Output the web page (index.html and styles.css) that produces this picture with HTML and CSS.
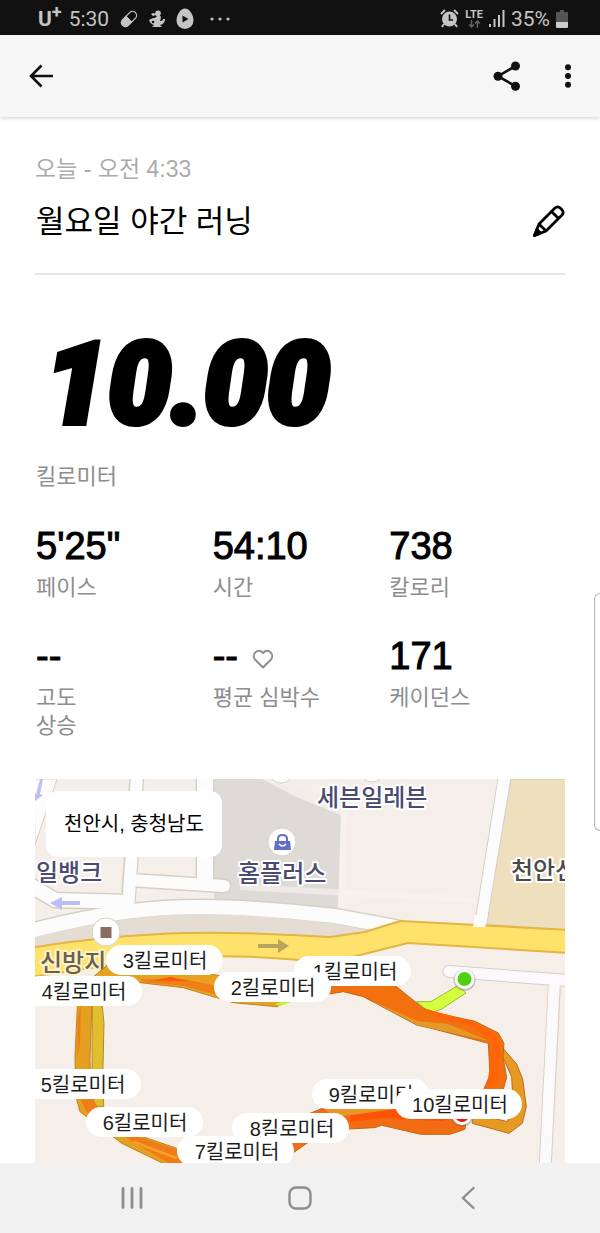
FILE: index.html
```html
<!DOCTYPE html>
<html lang="ko">
<head>
<meta charset="utf-8">
<meta name="viewport" content="width=device-width, initial-scale=1">
<title>월요일 야간 러닝</title>
<link rel="stylesheet" href="styles.css">
</head>
<body>
<div class="status">
  <div class="status-group">
    <span class="carrier">U<sup>+</sup></span>
    <span>5:30</span>
    <svg class="icon-pill" width="18" height="18" viewBox="0 0 20 20"><g transform="rotate(-45 10 10)"><rect x="0" y="5.500" width="20" height="9" rx="4.500" fill="none" stroke="#c4c4c4" stroke-width="1.400"/><path d="M10 5.500H4.500a4.500 4.500 0 0 0 0 9H10z" fill="#c4c4c4" stroke="#c4c4c4"/></g></svg>
    <svg class="icon-genie" width="16" height="18" viewBox="0 0 16 18"><g fill="#c4c4c4"><circle cx="9" cy="3.200" r="2.800"/><path d="M2 4l2-1 3 1 3 1q2 1 2 3l-1 3q3 0 3-2h2q0 5-5 6l2 2H3l2-2q-4-1-5-5l4-2h2l2-2-1-1-3 1z"/></g><circle cx="4" cy="12" r="1.300" fill="#111"/></svg>
    <svg class="icon-egg" width="18" height="22" viewBox="0 0 18 22"><path d="M9 .5C13.500.5 17.500 7 17.500 12.500a8.500 8.500 0 0 1-17 0C.5 7 4.500.5 9 .5z" fill="#c4c4c4"/><path d="M6.500 7.500v7l6-3.500z" fill="#111"/></svg>
    <svg class="icon-dots" width="20" height="4" viewBox="0 0 20 4" fill="#c4c4c4"><circle cx="2" cy="2" r="1.600"/><circle cx="10" cy="2" r="1.600"/><circle cx="18" cy="2" r="1.600"/></svg>
  </div>
  <div class="status-group status-right">
    <svg width="19" height="19" viewBox="0 0 19 19"><circle cx="9.500" cy="10" r="7.500" fill="#c4c4c4"/><path d="M1 5l4-4M18 5l-4-4M4 15l-2 3M15 15l2 3" stroke="#c4c4c4" stroke-width="2" fill="none"/><path d="M9.500 5.500V11H13" stroke="#111" stroke-width="1.600" fill="none"/></svg>
    <span class="lte">LTE<svg width="13" height="8" viewBox="0 0 13 8"><path d="M3.500 0v7M1 4.500L3.500 7 6 4.500M9.500 8V1M7 3.500L9.500 1 12 3.500" fill="none" stroke="#666" stroke-width="1.400"/></svg></span>
    <svg width="16" height="17" viewBox="0 0 16 17" fill="#c4c4c4"><path d="M0 14h2v3H0zM4.500 9h2v8h-2zM9 5h2v12H9zM13.500 0h2v17h-2z"/></svg>
    <span>35%</span>
    <svg width="12" height="18" viewBox="0 0 12 18"><path d="M4 0h4v2h3q1 0 1 1v9H0V3q0-1 1-1h3z" fill="#555"/><path d="M0 12h12v5q0 1-1 1H1q-1 0-1-1z" fill="#ccc"/></svg>
  </div>
</div>

<header class="bar">
  <button class="icon-button" aria-label="뒤로"><svg width="24" height="24" viewBox="0 0 24 24" fill="none" stroke="#111" stroke-width="2.600"><path d="M12.500 1.500L2 12l10.500 10.500M2 12h22"/></svg></button>
  <div class="bar-actions">
    <button class="icon-button" aria-label="공유"><svg width="28" height="30" viewBox="0 0 28 30"><path d="M22.500 5L5 15.200l17.500 10" fill="none" stroke="#111" stroke-width="2.600"/><g fill="#111"><circle cx="22.500" cy="5" r="4.500"/><circle cx="5" cy="15.200" r="4.500"/><circle cx="22.500" cy="25.200" r="4.500"/></g></svg></button>
    <button class="icon-button" aria-label="더보기"><svg width="6" height="24" viewBox="0 0 6 24" fill="#111"><circle cx="3" cy="3.200" r="3"/><circle cx="3" cy="12" r="3"/><circle cx="3" cy="20.800" r="3"/></svg></button>
  </div>
</header>

<main class="run">
  <section class="heading">
    <p class="date">오늘 - 오전 4:33</p>
    <div class="title-row">
      <h1 class="title">월요일 야간 러닝</h1>
      <button class="icon-button" aria-label="이름 편집"><svg width="32" height="32" viewBox="0 0 32 32" fill="none" stroke="#000" stroke-width="2.800" stroke-linejoin="round"><path d="M1.500 30.500L6 19 22 3q2.500-2.200 5-.2l2.200 2.200q2 2.500-.2 5L13 26zM18.500 6.500l7 7M6 19l7 7"/><path d="M1.500 30.500l2.500-6 3.500 3.500z" fill="#000"/></svg></button>
    </div>
  </section>

  <p class="distance">10.00</p>
  <p class="label">킬로미터</p>

  <section class="stats">
    <div><p class="value">5'25"</p><p class="label">페이스</p></div>
    <div><p class="value">54:10</p><p class="label">시간</p></div>
    <div><p class="value">738</p><p class="label">칼로리</p></div>
    <div><p class="value">--</p><p class="label">고도<br>상승</p></div>
    <div><p class="value">-- <svg class="heart" width="22" height="20" viewBox="0 0 22 20"><path d="M11 18.500L3 10.500C-1 5.500 6-2 11 4c5-6 12 1.500 8 6.500z" fill="none" stroke="#8d8d8d" stroke-width="2" stroke-linejoin="round"/></svg></p><p class="label">평균 심박수</p></div>
    <div><p class="value">171</p><p class="label">케이던스</p></div>
  </section>

  <section class="map">
    <svg class="map-art" viewBox="35 779 530 384" preserveAspectRatio="xMinYMin slice">
      <!-- ground -->
      <path fill="#f6eee8" d="M35 779h530v384H35z"/>
      <path fill="#dedad5" d="M212 779h52l28 12 45 20q4 3 4 8l-3 92-124-12z"/>
      <path fill="#f2ede8" d="M262 779h22l57 28v8l-45-18z"/>
      <path fill="none" stroke="#faf5f1" stroke-opacity=".6" stroke-width="6" d="M344 812l-3 98M240 887l235 13"/>
      <path fill="#eedfbd" stroke="#d6cdb5" d="M511 779h55v151l-80-6z"/>
      <!-- side streets -->
      <g fill="none" stroke="#d6d0c4">
        <path stroke-width="15" d="M137 775l-9 130"/>
        <path stroke-width="19" d="M205 775v110"/>
        <path stroke-width="15" stroke-linecap="round" d="M130 880l94 6"/>
        <path stroke-width="17" d="M30 885l25 15 75 2"/>
        <path stroke-width="17" d="M30 931C100 913 150 907 200 907c60 0 100 6 135 9l65 12"/>
        <path fill="#fdfcfd" d="M34 779h23l-22 66z"/>
        <path fill="#fdfcfd" d="M498 778h13l-25 150h-12z"/>
      </g>
      <path fill="#e5dcd3" d="M35 937c65-15 115-23 165-23 60 0 100 6 130 9l45 9-45 7-150-5-145 14z"/>
      <g fill="none" stroke="#fdfcfd">
        <path stroke-width="12" d="M137 775l-9 135"/>
        <path stroke-width="16" d="M205 775v110"/>
        <path stroke-width="12" stroke-linecap="round" d="M130 880l94 6"/>
        <path stroke-width="14" d="M30 885l25 15 75 2"/>
        <path stroke-width="14" d="M30 931C100 913 150 907 200 907c60 0 100 6 135 9l65 12"/>
      </g>
      <!-- main road -->
      <path fill="#ffe26c" stroke="#e3b543" stroke-width="2" d="M30 948q70-12 155-15 70-1 145 4l35-5 35-11 170 9v23l-162-10-48 12q-20 5-60 5-100-9-175 3l-95 14z"/>
      <path fill="#fdfcfd" d="M475 915h13l-3 12h-12z"/>
      <path fill="#b9a45e" d="M258 944h20v-5l11 7-11 7v-5h-20z"/>
      <path fill="#bfbdf6" d="M50 903l12-6v4h18v4H62v5zM36 795l4-16h3l-3 15 3 1-8 6v-8z"/>
      <!-- lower right streets -->
      <g fill="none" stroke-linecap="round">
        <path stroke="#d6d0c4" stroke-width="13" d="M449 971.500l120 9M554.500 984L545 1170"/>
        <path stroke="#fcf9fc" stroke-width="11" d="M449 971.500l120 9M554.500 980L545 1170"/>
      </g>
      <!-- places -->
      <g fill="#fff" stroke="#d6d0c8"><circle cx="372" cy="770" r="12"/><circle cx="281" cy="771" r="12"/><circle cx="282" cy="842" r="14"/><circle cx="106" cy="932" r="14"/></g>
      <path fill="#8b6b60" d="M100.500 927h11v11h-11z"/>
      <path fill="#626fc4" d="M275 841h15l1 9h-17z"/>
      <path fill="none" stroke="#626fc4" stroke-width="2" d="M278 842v-3q0-4 4.500-4t4.500 4v3"/>
      <path fill="none" stroke="#fff" stroke-width="1.500" d="M279 844q3.500 4 7 0"/>
      <g class="place">
        <text x="317" y="806">세븐일레븐</text>
        <text x="238" y="882">홈플러스</text>
        <text x="36" y="881">일뱅크</text>
        <text class="place-dark" x="511" y="879">천안산</text>
        <text class="place-brown" x="40" y="971">신방지</text>
      </g>
      <!-- route, western half -->
      <g transform="translate(30 960) scale(.3333)" stroke="#bb8420" stroke-width="3" stroke-linejoin="round">
        <path fill="#dfbf2e" d="M187 120h28l7 70-3 130 2 120h-28l-7-60z"/>
        <path fill="#e6a021" d="M143 120h43l-6 180 4 110 16 30 80 70 160 55 60 60h-70l-155-75-125-95-12-45-3-120z"/>
        <path fill="#ee7d17" stroke="none" d="M143 175l10-45-3 120-8 45zM150 418h38l30 45 85 60 150 50 20 50h-35L290 535l-120-80z"/>
        <path fill="none" stroke="#f7a024" stroke-width="8" d="M310 545l130 50"/>
        <path fill="#e8a222" d="M185 55l50-42 325 32 240 70-60 25-130-12-50-15-100-30-130-15z"/>
        <path fill="#f17f17" stroke="none" d="M330 57l130 0 100 20v28l-100-28-120-10z"/>
        <path fill="#ff5a0a" stroke="none" d="M370 62l50-12 60 14z"/>
        <path fill="#c7f22e" stroke="none" d="M735 132l70-22 10 5-65 23z"/>
      </g>
      <!-- route, eastern half -->
      <g transform="translate(300 960) scale(.3333)" stroke="#bb6a1c" stroke-width="3" stroke-linejoin="round">
        <path fill="#d4ff3e" stroke="#9dba34" d="M350 125h43l80-48 25 22-73 48-35 12z"/>
        <path fill="#e69a22" d="M605 260l45 52 18 45 11 83-12 50-40 30-110-30 0-30 105 25 18-45-5-90-27-60z"/>
        <path fill="#f36b12" d="M-35 575l65-115 50-20 70-15h180l170 40-5 43-45 15h-88l-117-27-20 7-100 5-80 25-65 45z"/>
        <path fill="#e8952a" stroke="none" d="M75 448l180-8 30 8-90 14-95 8z"/>
        <path fill="#ff5408" stroke="none" d="M150 466l130-18 170 28-25 8-175-10-100 12z"/>
        <path fill="#f3700f" d="M-10 60h275l105 85 40 14 115 25 70 35 17 31-3 40 11 63-13 45h-60l23-53-5-95-160-42-55-13-160-85-60-15-60 10-50 0z"/>
        <path fill="#e59a27" stroke="none" d="M215 122l140 62 90 8 120 50-160-34-53-13z"/>
        <path fill="#ff6408" stroke="none" d="M370 145l150 40 65 35 18 35-8 110-35 20 20-140-60-45-110-28z"/>
      </g>
      <circle cx="464.500" cy="980" r="11" fill="#7776"/><circle cx="464.500" cy="979" r="10" fill="#fff"/><circle cx="464.500" cy="979" r="7" fill="#4fd012"/>
      <circle cx="462" cy="1116" r="11" fill="#7776"/><circle cx="462" cy="1115" r="10" fill="#fff"/><circle cx="462" cy="1115" r="7" fill="#f5140c"/>
      <!-- kilometre markers -->
      <g class="marker">
        <rect x="294" y="956" width="117" height="30" rx="15"/><text x="355" y="979">1킬로미터</text>
        <rect x="214" y="972" width="117" height="30" rx="15"/><text x="273" y="995">2킬로미터</text>
        <rect x="106" y="945" width="117" height="30" rx="15"/><text x="165" y="968">3킬로미터</text>
        <rect x="25" y="976" width="117" height="30" rx="15"/><text x="84" y="999">4킬로미터</text>
        <rect x="24" y="1069" width="117" height="30" rx="15"/><text x="83" y="1092">5킬로미터</text>
        <rect x="86" y="1107" width="117" height="30" rx="15"/><text x="145" y="1130">6킬로미터</text>
        <rect x="232" y="1113" width="117" height="30" rx="15"/><text x="292" y="1136">8킬로미터</text>
        <rect x="177" y="1136" width="117" height="30" rx="15"/><text x="237" y="1159">7킬로미터</text>
        <rect x="312" y="1079" width="117" height="30" rx="15"/><text x="371" y="1102">9킬로미터</text>
        <rect x="395" y="1089" width="127" height="30" rx="15"/><text x="460" y="1112">10킬로미터</text>
      </g>
    </svg>
    <p class="place-card">천안시, 충청남도</p>
  </section>
</main>

<div class="edge-handle"></div>

<nav class="nav">
  <button class="icon-button" aria-label="최근 앱"><svg width="22" height="24" viewBox="0 0 22 24" stroke="#8d8d8d" stroke-width="2.800" stroke-linecap="round"><path d="M2 2.500v19M11 2.500v19M20 2.500v19"/></svg></button>
  <button class="icon-button" aria-label="홈"><svg width="24" height="24" viewBox="0 0 24 24" fill="none" stroke="#8d8d8d" stroke-width="2.400"><rect x="1.500" y="1.500" width="21" height="21" rx="6.500"/></svg></button>
  <button class="icon-button" aria-label="뒤로"><svg width="14" height="24" viewBox="0 0 14 24" fill="none" stroke="#8d8d8d" stroke-width="2.400" stroke-linecap="round"><path d="M12.500 2L2 12l10.500 10"/></svg></button>
</nav>
</body>
</html>
```

FILE: styles.css
```css
* {
  box-sizing: border-box;
}

body {
  margin: 0;
  min-height: 100vh;
  display: flex;
  flex-direction: column;
  position: relative;
  background: #fff;
  color: #000;
  font-family: "Liberation Sans", "Noto Sans CJK KR", sans-serif;
}

p,
h1 {
  margin: 0;
}

svg {
  display: block;
}

.icon-button {
  padding: 0;
  border: 0;
  background: none;
}

/* Status bar */
.status {
  height: 35px;
  padding: 2px 32px 0 38px;
  display: flex;
  justify-content: space-between;
  align-items: center;
  background: #111;
  color: #c4c4c4;
  font: 21px/32px Roboto, sans-serif;
}

.status-group {
  display: flex;
  align-items: center;
  gap: 11px;
}

.status-right {
  gap: 6px;
}

.carrier {
  margin-right: -4px;
  font-weight: 700;
  line-height: 20px;
}

.carrier sup {
  font-size: 18px;
  line-height: 1px;
}

.icon-dots {
  margin-left: 5px;
}

.lte {
  display: flex;
  flex-direction: column;
  align-items: center;
  font-size: 11px;
  font-weight: 700;
  line-height: 11px;
}

/* App bar */
.bar {
  height: 82px;
  padding: 0 29px;
  display: flex;
  justify-content: space-between;
  align-items: center;
  background: #f6f6f6;
  box-shadow: 0 1px 4px #0003;
}

.bar-actions {
  display: flex;
  align-items: center;
  gap: 44px;
}

/* Run summary */
.run {
  flex: 1;
  padding: 36px 35px 0;
  display: flex;
  flex-direction: column;
}

.heading {
  padding-bottom: 29px;
  border-bottom: 2px solid #e5e5e5;
}

.date {
  color: #ababab;
  font-size: 23px;
  line-height: 32px;
}

.title-row {
  margin-top: 13px;
  display: flex;
  justify-content: space-between;
  align-items: center;
}

.title {
  padding: 2px 0 0 1px;
  font-size: 31px;
  font-weight: 400;
  line-height: 44px;
}

.distance {
  margin-top: 50px;
  padding-left: 10px;
  font: italic 900 112px/120px Roboto, sans-serif;
  -webkit-text-stroke: 6px #000;
}

.label {
  padding-left: 1px;
  color: #8d8d8d;
  font-size: 22px;
  line-height: 28px;
}

.distance + .label {
  margin-top: 18px;
}

.stats {
  margin-top: 33px;
  display: grid;
  grid-template-columns: repeat(3, 1fr);
  row-gap: 32px;
}

.stats .label {
  margin-top: 6px;
}

.value {
  padding-left: 1px;
  display: flex;
  align-items: center;
  gap: 14px;
  font-size: 38px;
  line-height: 44px;
  -webkit-text-stroke: 1px #000;
}

.heart {
  margin-top: 6px;
}

/* Map */
.map {
  flex: 1 0 384px;
  height: 384px;
  margin-top: 39px;
  position: relative;
  overflow: hidden;
}

.map-art {
  width: 100%;
  height: 100%;
}

.place {
  fill: #4b4a70;
  stroke: #fff;
  stroke-width: 4px;
  stroke-linejoin: round;
  paint-order: stroke;
  font-size: 24px;
  font-weight: 500;
}

.place-dark {
  fill: #4a4a4a;
}

.place-brown {
  fill: #6b5f55;
  stroke: #fff3c4;
}

.marker {
  fill: #fff;
  font-size: 20px;
  text-anchor: middle;
}

.marker text {
  fill: #1c1c1c;
}

.place-card {
  position: absolute;
  left: 11px;
  top: 12px;
  padding: 16px 18px;
  border-radius: 12px;
  background: #fff;
  font-size: 20px;
  line-height: 34px;
}

.edge-handle {
  position: absolute;
  right: 0;
  top: 593px;
  width: 6px;
  height: 238px;
  border: 1px solid #b5b5b5;
  border-right: 0;
  border-radius: 8px 0 0 8px;
  background: #fff;
}

/* System navigation */
.nav {
  height: 70px;
  padding: 0 48px;
  display: grid;
  grid-template-columns: repeat(3, 1fr);
  justify-items: center;
  align-items: center;
  background: #f1f1f1;
}
```
